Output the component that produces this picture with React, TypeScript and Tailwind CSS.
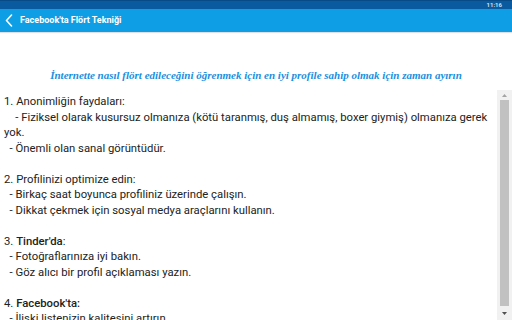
export default function App() {
  return (
    <div className="flex h-[320px] w-[512px] flex-col overflow-hidden bg-white font-['Roboto',sans-serif]">
      {/* status bar */}
      <div className="flex h-[9px] items-center justify-end border-t border-[#084a86] bg-[#0a5a9f] pr-[10px]">
        <span className="text-[6px] font-bold leading-none text-[#cfe0ef]">11:16</span>
      </div>

      {/* app bar */}
      <div className="flex h-[23px] items-center gap-[7px] bg-[#0e9ee5] pl-[5px] shadow-[0_1px_1px_rgba(0,0,0,0.12)]">
        <svg width="8" height="13" viewBox="0 0 8 13" fill="none">
          <path d="M6.5 1L1.5 6.5L6.5 12" stroke="white" strokeWidth="1.6" strokeLinecap="round" strokeLinejoin="round" />
        </svg>
        <span className="text-[9px] font-bold text-white">Facebook'ta Flört Tekniği</span>
      </div>

      {/* intro */}
      <div className="pt-[38px] text-center font-['Liberation_Serif',serif] text-[11px] font-bold italic leading-none text-[#1a8fe0]">
        İnternette nasıl flört edileceğini öğrenmek için en iyi profile sahip olmak için zaman ayırın
      </div>

      {/* content + scrollbar */}
      <div className="mt-[9px] flex min-h-0 flex-1">
        <div className="min-w-0 flex-1 overflow-hidden whitespace-pre-wrap pl-[4px] pt-[4px] text-[11.3px] leading-[15.5px] text-[#222]">
          <div>1. Anonimliğin faydaları:</div>
          <div>{"    - Fiziksel olarak kusursuz olmanıza (kötü taranmış, duş almamış, boxer giymiş) olmanıza gerek yok."}</div>
          <div>{"  - Önemli olan sanal görüntüdür."}</div>
          <div>{" "}</div>
          <div>2. Profilinizi optimize edin:</div>
          <div>{"  - Birkaç saat boyunca profiliniz üzerinde çalışın."}</div>
          <div>{"  - Dikkat çekmek için sosyal medya araçlarını kullanın."}</div>
          <div>{" "}</div>
          <div>
            3. <span className="font-medium">Tinder'da</span>:
          </div>
          <div>{"  - Fotoğraflarınıza iyi bakın."}</div>
          <div>{"  - Göz alıcı bir profil açıklaması yazın."}</div>
          <div>{" "}</div>
          <div>
            4. <span className="font-medium">Facebook'ta:</span>
          </div>
          <div>{"  - İlişki listenizin kalitesini artırın."}</div>
        </div>

        {/* scrollbar */}
        <div className="flex w-[15px] flex-col items-center bg-[#f1f1f1]">
          <div className="flex h-[10px] items-center justify-center">
            <svg width="5" height="3" viewBox="0 0 5 3">
              <path d="M0 3L2.5 0L5 3Z" fill="#a3a3a3" />
            </svg>
          </div>
          <div className="w-[9px] flex-1 bg-[#c1c1c1]" />
          <div className="flex h-[14px] items-center justify-center">
            <svg width="5" height="3" viewBox="0 0 5 3">
              <path d="M0 0L2.5 3L5 0Z" fill="#505050" />
            </svg>
          </div>
        </div>
      </div>
    </div>
  )
}
